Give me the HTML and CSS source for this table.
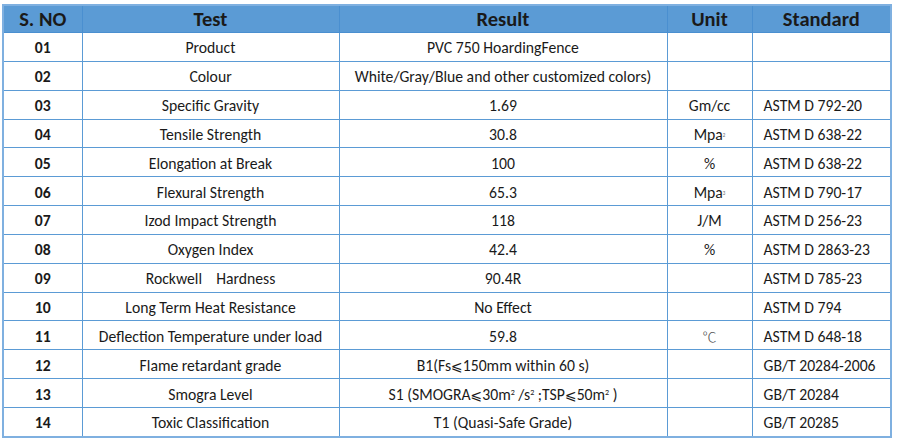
FILE: index.html
```html
<!DOCTYPE html>
<html>
<head>
<meta charset="utf-8">
<link rel="stylesheet" href="styles.css">
</head>
<body>
<div class="page">
<table class="spec">
<colgroup>
<col class="c-no"><col class="c-test"><col class="c-res"><col class="c-unit"><col class="c-std">
</colgroup>
<thead>
<tr><th>S. NO</th><th>Test</th><th>Result</th><th>Unit</th><th>Standard</th></tr>
</thead>
<tbody>
<tr><td class="no">01</td><td>Product</td><td>PVC 750 HoardingFence</td><td></td><td class="std"></td></tr>
<tr><td class="no">02</td><td>Colour</td><td>White/Gray/Blue and other customized colors)</td><td></td><td class="std"></td></tr>
<tr><td class="no">03</td><td>Specific Gravity</td><td>1.69</td><td>Gm/cc</td><td class="std">ASTM D 792-20</td></tr>
<tr><td class="no">04</td><td>Tensile Strength</td><td>30.8</td><td>Mpa<sup class="tiny">2</sup></td><td class="std">ASTM D 638-22</td></tr>
<tr><td class="no">05</td><td>Elongation at Break</td><td>100</td><td>%</td><td class="std">ASTM D 638-22</td></tr>
<tr><td class="no">06</td><td>Flexural Strength</td><td>65.3</td><td>Mpa<sup class="tiny">3</sup></td><td class="std">ASTM D 790-17</td></tr>
<tr><td class="no">07</td><td>Izod Impact Strength</td><td>118</td><td>J/M</td><td class="std">ASTM D 256-23</td></tr>
<tr><td class="no">08</td><td>Oxygen Index</td><td>42.4</td><td>%</td><td class="std">ASTM D 2863-23</td></tr>
<tr><td class="no">09</td><td>Rockwell&nbsp;&nbsp;&nbsp;&nbsp;Hardness</td><td>90.4R</td><td></td><td class="std">ASTM D 785-23</td></tr>
<tr><td class="no">10</td><td>Long Term Heat Resistance</td><td>No Effect</td><td></td><td class="std">ASTM D 794</td></tr>
<tr><td class="no">11</td><td>Deflection Temperature under load</td><td>59.8</td><td><span class="cel">℃</span></td><td class="std">ASTM D 648-18</td></tr>
<tr><td class="no">12</td><td>Flame retardant grade</td><td>B1(Fs<span class="le">⩽</span>150mm within 60 s)</td><td></td><td class="std">GB/T 20284-2006</td></tr>
<tr><td class="no">13</td><td>Smogra Level</td><td>S1 (SMOGRA<span class="le">⩽</span>30m<sup>2</sup> /s<sup>2</sup> ;TSP<span class="le">⩽</span>50m<sup>2</sup> )</td><td></td><td class="std">GB/T 20284</td></tr>
<tr><td class="no">14</td><td>Toxic Classification</td><td>T1 (Quasi-Safe Grade)</td><td></td><td class="std">GB/T 20285</td></tr>
</tbody>
</table>
</div>
</body>
</html>
```

FILE: styles.css
```css
html, body {
  margin: 0;
  padding: 0;
  background: #ffffff;
}
.page {
  padding: 4px 0 0 2px;
}
.spec {
  border-collapse: collapse;
  table-layout: fixed;
  width: 888px;
  font-family: "Carlito", "Lato", "Open Sans", sans-serif;
  color: #1a1a1a;
  border: 2px solid #7fb0e0;
}
.c-no { width: 79px; }
.c-test { width: 257px; }
.c-res { width: 328px; }
.c-unit { width: 85px; }
.c-std { width: 139px; }
.spec th, .spec td {
  border: 1px solid #5b9bd5;
  text-align: center;
  padding: 0;
  white-space: nowrap;
}
.spec th {
  background: #5b9bd5;
  height: 26px;
  font-size: 20.5px;
  font-weight: bold;
  color: #1a1a1a;
  border-color: #4a8fd0;
}
.spec td {
  height: 25.85px;
  padding-top: 2px;
  font-size: 15.7px;
}
.spec td.no {
  font-weight: bold;
}
.spec td.std {
  text-align: left;
  padding-left: 11px;
}
.tiny {
  font-size: 5px;
  vertical-align: 3px;
  color: #666;
}
sup {
  font-size: 8px;
  vertical-align: 5px;
  line-height: 0;
}
.le {
  font-family: "DejaVu Sans", sans-serif;
  font-size: 14px;
}
.cel {
  font-family: "Noto Sans CJK SC", sans-serif;
  font-weight: 300;
  color: #555;
  font-size: 14px;
}
```
